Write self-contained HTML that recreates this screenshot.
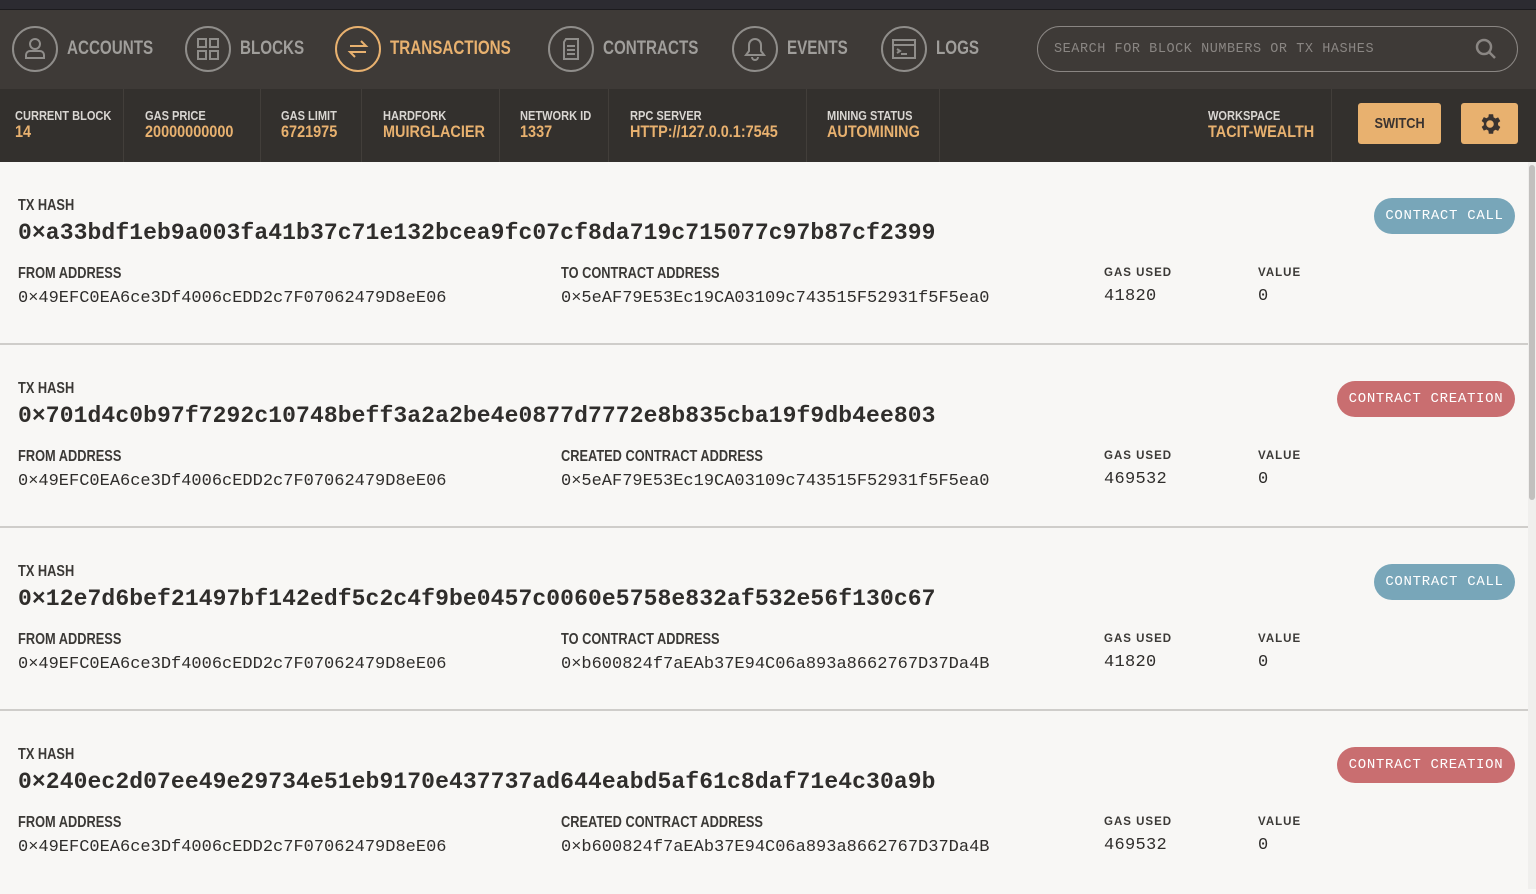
<!DOCTYPE html>
<html><head><meta charset="utf-8"><style>
*{margin:0;padding:0;box-sizing:border-box}
body{width:1536px;height:889px;overflow:hidden;background:#f8f7f5;font-family:"Liberation Sans",sans-serif;position:relative}
.cx{display:inline-block;transform:scaleX(.8);transform-origin:left center;white-space:nowrap}
.top{position:absolute;left:0;top:0;width:1536px;height:10px;background:#2c2b31;border-bottom:1px solid #1c1b1e}
.nav{position:absolute;left:0;top:10px;width:1536px;height:79px;background:#3e3a37}
.ni{position:absolute;top:16px;height:46px;display:flex;align-items:center;color:#a09e9b;font-weight:bold;font-size:19px;white-space:nowrap}
.ni .c{width:46px;height:46px;border:2px solid #8f8d8a;border-radius:50%;margin-right:9px;display:flex;align-items:center;justify-content:center;flex:none}
.ni.a{color:#e8b16f}.ni.a .c{border-color:#e8b16f}
.search{position:absolute;left:1037px;top:16px;width:481px;height:46px;border:1.5px solid #8a8683;border-radius:23px;color:#8a8683;font-family:"Liberation Mono",monospace;font-size:13.5px;letter-spacing:.55px;padding:15px 0 0 16px}
.stats{position:absolute;left:0;top:89px;width:1536px;height:73px;background:#33302d}
.st{position:absolute;top:0;height:73px;border-right:1px solid #423e3a;padding:19px 0 0 0;white-space:nowrap}
.st .l{color:#d9d6d2;font-size:13px;font-weight:bold;display:block;transform:scaleX(.85);transform-origin:left}
.st .v{color:#e8b16f;font-size:17px;font-weight:bold;display:block;transform:scaleX(.85);transform-origin:left;line-height:18px}
.btn{position:absolute;background:#e8b16f;border-radius:3px;top:103px;height:41px;color:#3a3330;font-weight:bold;font-size:15px;text-align:center;line-height:41px}
.row{position:absolute;left:0;width:1528px;height:183px;border-bottom:2px solid #cfcdca}
.lab{position:absolute;color:#3b3936;font-size:16px;font-weight:bold;transform:scaleX(.8);transform-origin:left;white-space:nowrap}
.hash{position:absolute;left:18px;top:58px;font-family:"Liberation Mono",monospace;font-size:23px;color:#2f2d2b;font-weight:bold;letter-spacing:.1px}
.addr{position:absolute;top:127px;font-family:"Liberation Mono",monospace;font-size:17px;color:#2f2d2b}
.sl{position:absolute;top:105px;font-family:"Liberation Sans",sans-serif;font-size:11.5px;font-weight:bold;letter-spacing:1px;color:#3b3936}
.sv{position:absolute;top:125px;font-family:"Liberation Mono",monospace;font-size:17px;color:#2f2d2b;letter-spacing:.3px}
.badge{position:absolute;top:36px;height:36px;border-radius:18px;color:#fff;font-family:"Liberation Mono",monospace;font-size:14px;letter-spacing:.7px;line-height:36px;text-align:center}
.call{left:1374px;width:141px;background:#78a6b9}
.cre{left:1337px;width:178px;background:#c96e70}
.scroll{position:absolute;left:1528px;top:162px;width:8px;height:727px;background:#f0efed}
.thumb{position:absolute;left:1529px;top:165px;width:6px;height:335px;border-radius:3px;background:#c2c0be}
</style></head><body>
<div class="top"></div>
<div class="nav">
 <div class="ni" style="left:12px"><div class="c"><svg width="26" height="26" viewBox="0 0 26 26" fill="none" stroke="#8f8d8a" stroke-width="2"><circle cx="13" cy="8" r="5"/><path d="M4 22v-3a4 4 0 0 1 4-4h10a4 4 0 0 1 4 4v3z"/></svg></div><span class="cx">ACCOUNTS</span></div>
 <div class="ni" style="left:185px"><div class="c"><svg width="24" height="24" viewBox="0 0 24 24" fill="none" stroke="#8f8d8a" stroke-width="2"><rect x="2" y="2" width="8" height="8"/><rect x="14" y="2" width="8" height="8"/><rect x="2" y="14" width="8" height="8"/><rect x="14" y="14" width="8" height="8"/></svg></div><span class="cx">BLOCKS</span></div>
 <div class="ni a" style="left:335px"><div class="c"><svg width="26" height="26" viewBox="0 0 26 26" fill="none" stroke="#e8b16f" stroke-width="2"><path d="M5 10h16l-5-5M21 16H5l5 5"/></svg></div><span class="cx">TRANSACTIONS</span></div>
 <div class="ni" style="left:548px"><div class="c"><svg width="22" height="24" viewBox="0 0 22 24" fill="none" stroke="#8f8d8a" stroke-width="2"><path d="M6 2h12v20H4V5z"/><path d="M7 9h8M7 13h8M7 17h8"/></svg></div><span class="cx">CONTRACTS</span></div>
 <div class="ni" style="left:732px"><div class="c"><svg width="24" height="26" viewBox="0 0 24 26" fill="none" stroke="#8f8d8a" stroke-width="2"><path d="M12 3a6 6 0 0 0-6 6v6l-3 4h18l-3-4V9a6 6 0 0 0-6-6zM9 21a3 3 0 0 0 6 0"/></svg></div><span class="cx">EVENTS</span></div>
 <div class="ni" style="left:881px"><div class="c"><svg width="26" height="22" viewBox="0 0 26 22" fill="none" stroke="#8f8d8a" stroke-width="2"><rect x="2" y="2" width="22" height="18"/><path d="M2 7h22M6 11l3 2-3 2M10 16h6"/></svg></div><span class="cx">LOGS</span></div>
 <div class="search">SEARCH FOR BLOCK NUMBERS OR TX HASHES<svg style="position:absolute;right:20px;top:11px" width="22" height="22" viewBox="0 0 22 22" fill="none" stroke="#8a8683" stroke-width="2.5"><circle cx="9" cy="9" r="7"/><path d="M14 14l6 6"/></svg></div>
</div>
<div class="stats">
 <div class="st" style="left:0;width:124px;padding-left:15px"><span class="l">CURRENT BLOCK</span><span class="v">14</span></div>
 <div class="st" style="left:124px;width:137px;padding-left:21px"><span class="l">GAS PRICE</span><span class="v">20000000000</span></div>
 <div class="st" style="left:261px;width:101px;padding-left:20px"><span class="l">GAS LIMIT</span><span class="v">6721975</span></div>
 <div class="st" style="left:362px;width:138px;padding-left:21px"><span class="l">HARDFORK</span><span class="v">MUIRGLACIER</span></div>
 <div class="st" style="left:500px;width:109px;padding-left:20px"><span class="l">NETWORK ID</span><span class="v">1337</span></div>
 <div class="st" style="left:609px;width:198px;padding-left:21px"><span class="l">RPC SERVER</span><span class="v">HTTP://127.0.0.1:7545</span></div>
 <div class="st" style="left:807px;width:133px;padding-left:20px"><span class="l">MINING STATUS</span><span class="v">AUTOMINING</span></div>
 <div class="st" style="left:1188px;width:144px;padding-left:20px"><span class="l">WORKSPACE</span><span class="v">TACIT-WEALTH</span></div>
</div>
<div class="btn" style="left:1358px;width:83px"><span class="cx" style="transform:scaleX(.85);transform-origin:center">SWITCH</span></div>
<div class="btn" style="left:1461px;width:57px"><svg style="margin-top:8px" width="26" height="26" viewBox="0 0 24 24"><path fill="#3a3330" d="M19.4 13a7.5 7.5 0 0 0 0-2l2.1-1.6-2-3.5-2.5 1a7.4 7.4 0 0 0-1.7-1L14.9 3h-4l-.4 2.7a7.4 7.4 0 0 0-1.7 1l-2.5-1-2 3.5L6.4 11a7.5 7.5 0 0 0 0 2l-2.1 1.6 2 3.5 2.5-1a7.4 7.4 0 0 0 1.7 1l.4 2.9h4l.4-2.7a7.4 7.4 0 0 0 1.7-1l2.5 1 2-3.5zM12 15.5a3.5 3.5 0 1 1 0-7 3.5 3.5 0 0 1 0 7z"/></svg></div>

<div class="row" style="top:162px">
 <div class="lab" style="left:18px;top:35px">TX HASH</div>
 <div class="hash">0×a33bdf1eb9a003fa41b37c71e132bcea9fc07cf8da719c715077c97b87cf2399</div>
 <div class="lab" style="left:18px;top:103px">FROM ADDRESS</div><div class="addr" style="left:18px">0×49EFC0EA6ce3Df4006cEDD2c7F07062479D8eE06</div>
 <div class="lab" style="left:561px;top:103px">TO CONTRACT ADDRESS</div><div class="addr" style="left:561px">0×5eAF79E53Ec19CA03109c743515F52931f5F5ea0</div>
 <div class="sl" style="left:1104px">GAS USED</div><div class="sv" style="left:1104px">41820</div>
 <div class="sl" style="left:1258px">VALUE</div><div class="sv" style="left:1258px">0</div>
 <div class="badge call">CONTRACT CALL</div>
</div>
<div class="row" style="top:345px">
 <div class="lab" style="left:18px;top:35px">TX HASH</div>
 <div class="hash">0×701d4c0b97f7292c10748beff3a2a2be4e0877d7772e8b835cba19f9db4ee803</div>
 <div class="lab" style="left:18px;top:103px">FROM ADDRESS</div><div class="addr" style="left:18px">0×49EFC0EA6ce3Df4006cEDD2c7F07062479D8eE06</div>
 <div class="lab" style="left:561px;top:103px">CREATED CONTRACT ADDRESS</div><div class="addr" style="left:561px">0×5eAF79E53Ec19CA03109c743515F52931f5F5ea0</div>
 <div class="sl" style="left:1104px">GAS USED</div><div class="sv" style="left:1104px">469532</div>
 <div class="sl" style="left:1258px">VALUE</div><div class="sv" style="left:1258px">0</div>
 <div class="badge cre">CONTRACT CREATION</div>
</div>
<div class="row" style="top:528px">
 <div class="lab" style="left:18px;top:35px">TX HASH</div>
 <div class="hash">0×12e7d6bef21497bf142edf5c2c4f9be0457c0060e5758e832af532e56f130c67</div>
 <div class="lab" style="left:18px;top:103px">FROM ADDRESS</div><div class="addr" style="left:18px">0×49EFC0EA6ce3Df4006cEDD2c7F07062479D8eE06</div>
 <div class="lab" style="left:561px;top:103px">TO CONTRACT ADDRESS</div><div class="addr" style="left:561px">0×b600824f7aEAb37E94C06a893a8662767D37Da4B</div>
 <div class="sl" style="left:1104px">GAS USED</div><div class="sv" style="left:1104px">41820</div>
 <div class="sl" style="left:1258px">VALUE</div><div class="sv" style="left:1258px">0</div>
 <div class="badge call">CONTRACT CALL</div>
</div>
<div class="row" style="top:711px;border-bottom:none">
 <div class="lab" style="left:18px;top:35px">TX HASH</div>
 <div class="hash">0×240ec2d07ee49e29734e51eb9170e437737ad644eabd5af61c8daf71e4c30a9b</div>
 <div class="lab" style="left:18px;top:103px">FROM ADDRESS</div><div class="addr" style="left:18px">0×49EFC0EA6ce3Df4006cEDD2c7F07062479D8eE06</div>
 <div class="lab" style="left:561px;top:103px">CREATED CONTRACT ADDRESS</div><div class="addr" style="left:561px">0×b600824f7aEAb37E94C06a893a8662767D37Da4B</div>
 <div class="sl" style="left:1104px">GAS USED</div><div class="sv" style="left:1104px">469532</div>
 <div class="sl" style="left:1258px">VALUE</div><div class="sv" style="left:1258px">0</div>
 <div class="badge cre">CONTRACT CREATION</div>
</div>
<div class="scroll"></div><div class="thumb"></div>
</body></html>
